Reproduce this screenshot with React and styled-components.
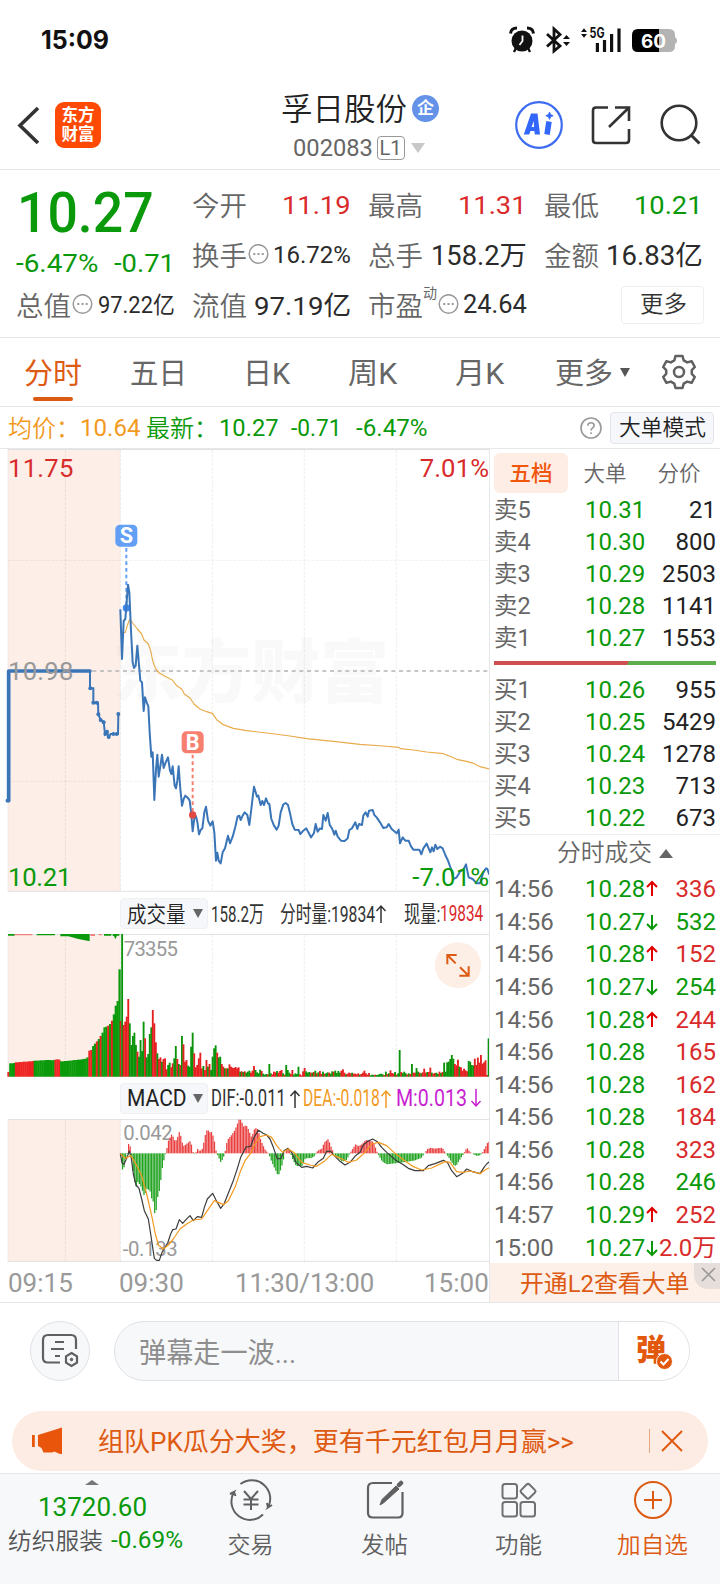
import React, { useLayoutEffect, useRef, useState } from "react";
import styled, { createGlobalStyle } from "styled-components";

const GREEN = "#0a990a";
const RED = "#d92b2b";
const ORANGE = "#dd5a12";
const LINE = "#e6e7e9";

const GlobalStyle = createGlobalStyle`
  * { box-sizing: border-box; }
  body {
    margin: 0;
    background: #fff;
    color: #222;
    font-family: Roboto, "Noto Sans CJK SC", sans-serif;
  }
  svg { display: block; flex: none; }
`;

const Page = styled.div`
  width: 720px;
  height: 1584px;
  display: flex;
  flex-direction: column;
  overflow: hidden;
`;

const FitBox = styled.span`
  display: inline-block;
  flex: none;
  width: ${(p) => p.$w}px;
  font-size: ${(p) => p.$size}px;
  font-weight: ${(p) => p.$weight || 400};
  color: ${(p) => p.$color || "inherit"};
  line-height: 1.2;
  margin-left: ${(p) => p.$ml || 0}px;
`;

const FitInner = styled.span`
  display: inline-block;
  white-space: pre;
  transform-origin: left center;
`;

const HAN = /[\u4e00-\u9fa5]/;
const HAN_ONLY = /^[\u4e00-\u9fa5：]+$/;

// Squeezes or stretches a piece of text to an exact width,
// Chinese text also sits a bit lower and is drawn lighter
function Fit({ w, size, color, weight, ml, drop = 0.065, children }) {
  const ref = useRef(null);
  const [scale, setScale] = useState(1);
  const text = String(children);

  useLayoutEffect(() => {
    setScale(w / ref.current.offsetWidth);
  }, [w, children]);

  return (
    <FitBox $w={w} $size={size} $color={color} $weight={weight || (HAN_ONLY.test(text) ? 350 : 400)} $ml={ml}>
      <FitInner
        ref={ref}
        style={{ transform: `translateY(${HAN.test(text) ? drop : 0}em) scaleX(${scale})` }}
      >
        {children}
      </FitInner>
    </FitBox>
  );
}

/* ---------- status bar + header ---------- */

const StatusBar = styled.div`
  height: 80px;
  flex: none;
  display: flex;
  justify-content: space-between;
  padding: 0 40px;
  font-family: Inter, sans-serif;
`;

const Clock = styled.div`
  padding-top: 23.5px;
`;

const StatusIcons = styled.div`
  padding-top: 24px;
  margin-right: 2px;
`;

const Header = styled.header`
  height: 90px;
  flex: none;
  display: grid;
  grid-template-columns: 240px 1fr 240px;
  border-bottom: 1px solid ${LINE};
`;

const HeaderLeft = styled.div`
  display: flex;
  align-items: center;
  padding-left: 17px;
  gap: 15px;
`;

const Logo = styled.div`
  width: 46px;
  height: 46px;
  border-radius: 9px;
  background: #ff4a05;
  color: #fff;
  font-size: 16.5px;
  font-weight: 700;
  line-height: 19px;
  padding-top: 4px;
  text-align: center;
`;

const TitleBlock = styled.div`
  display: flex;
  flex-direction: column;
  align-items: center;
`;

const TitleRow = styled.div`
  display: flex;
  align-items: center;
  height: 40px;
  margin-top: 8px;
  gap: 5px;
`;

const CorpBadge = styled.span`
  width: 27px;
  height: 27px;
  border-radius: 50%;
  background: #6492e8;
  color: #fff;
  font-size: 17px;
  font-weight: 700;
  line-height: 27px;
  text-align: center;
`;

const CodeRow = styled.div`
  display: flex;
  align-items: center;
  height: 28px;
  margin-top: 6px;
  margin-right: 3px;
  color: #666;
`;

const LevelTag = styled.span`
  width: 28px;
  height: 24px;
  margin: 0 6px 0 4px;
  border: 1px solid #999;
  border-radius: 4px;
  font-size: 20px;
  line-height: 22px;
  text-align: center;
`;

const Triangle = styled.span`
  display: inline-block;
  flex: none;
  width: 0;
  height: 0;
  border: ${(p) => p.$w / 2}px solid transparent;
  border-top: ${(p) => (p.$up ? 0 : p.$h)}px solid ${(p) => p.$color};
  border-bottom: ${(p) => (p.$up ? p.$h : 0)}px solid
    ${(p) => (p.$up ? p.$color : "transparent")};
  margin-left: ${(p) => p.$ml || 0}px;
`;

const HeaderRight = styled.div`
  display: flex;
  padding: 19px 0 0 34px;
`;

/* ---------- quote ---------- */

const Quote = styled.section`
  height: 168px;
  flex: none;
  display: flex;
  gap: 18px;
  padding: 10px 17px 0;
  border-bottom: 1px solid ${LINE};
`;

const QuoteCol = styled.div`
  width: 158px;
  display: flex;
  flex-direction: column;
`;

const QuoteCell = styled.div`
  height: ${(p) => p.$h || 50}px;
  padding-bottom: ${(p) => p.$pb || 0}px;
  display: flex;
  align-items: center;
  justify-content: ${(p) => (p.$end ? "flex-end" : "space-between")};
  color: #2b2b2b;
`;

const QuoteLabel = styled.span`
  display: flex;
  align-items: center;
  margin-left: -1px;
  color: #666;
`;

const Sup = styled.sup`
  font-size: 14px;
  line-height: 14px;
  align-self: flex-start;
  margin-top: -3px;
`;

const MoreButton = styled.button`
  width: 83px;
  height: 38px;
  margin-right: -1px;
  padding: 0;
  border: 1px solid #eceef0;
  border-radius: 4px;
  background: #fff;
  font-family: inherit;
  color: #333;
`;

/* ---------- tabs ---------- */

const Tabs = styled.nav`
  height: 69px;
  flex: none;
  display: grid;
  grid-template-columns: 106px 113px 105px 107px 100px 107px 35px;
  padding-left: 24px;
  align-items: center;
  border-bottom: 1px solid ${LINE};
`;

const Tab = styled.div`
  position: relative;
  height: 100%;
  display: flex;
  align-items: center;
  color: ${(p) => (p.$active ? ORANGE : "#666")};
  &::after {
    content: "";
    display: ${(p) => (p.$active ? "block" : "none")};
    position: absolute;
    left: 9px;
    bottom: 5px;
    width: 40px;
    height: 4px;
    border-radius: 2px;
    background: ${ORANGE};
  }
`;

const AvgRow = styled.div`
  height: 42px;
  flex: none;
  display: flex;
  align-items: center;
  padding: 0 6px 0 8px;
  border-bottom: 1px solid ${LINE};
`;

const ModeButton = styled.button`
  width: 104px;
  height: 32px;
  margin-left: 8px;
  padding: 0;
  border: 1px solid #e3e5ea;
  border-radius: 4px;
  background: #f6f7fa;
  font-family: inherit;
  color: #222;
`;

const Spacer = styled.div`
  flex: 1;
`;

/* ---------- charts ---------- */

const Body = styled.main`
  height: 854px;
  flex: none;
  display: flex;
  border-bottom: 1px solid ${LINE};
`;

const Charts = styled.div`
  width: 490px;
  flex: none;
  border-right: 1px solid ${LINE};
`;

const LegendRow = styled.div`
  height: 42px;
  display: flex;
  align-items: center;
  padding: 1px 0 0 120px;
`;

const LegendButton = styled.div`
  width: 88px;
  height: 31px;
  flex: none;
  display: flex;
  align-items: center;
  padding-left: 6px;
  border: 1px solid #eef0f2;
  border-radius: 4px;
  background: #f6f7fa;
  color: #222;
`;

const TimeAxis = styled.div`
  height: 40px;
  display: flex;
  align-items: center;
  padding: 3px 0 0 8px;
`;

const points = (s) => s.trim().split(/\s+/).join(" ");

const PRE_LINE = points(`270,666 270,718 280,718 280,761 294,761 295,796 302,813 311,818
  315,855 321,848 326,864 332,855 354,855 355,795`);

const PRE_DOTS = [
  [271, 718], [280, 761], [290, 761], [295, 796], [302, 813], [311, 820],
  [316, 855], [321, 848], [326, 864], [340, 855], [350, 855], [355, 795],
];

const PRICE = points(`361,481 366,630 371,516 376,510 384,407 388,430 393,545 398,640 402,657
  407,650 412,590 418,660 421,695 426,700 431,786 435,745 440,760 445,772 449,850 454,923
  458,910 463,1053 468,960 472,917 476,983 482,945 486,917 491,957 497,940 504,925 510,965
  514,975 518,952 524,1010 528,1018 532,995 536,952 541,1020 546,1070 551,1050 556,1040
  563,1046 569,1055 573,1085 578,1147 584,1100 588,1102 592,1118 597,1156 602,1143 607,1138
  613,1090 618,1073 624,1115 631,1130 638,1117 643,1150 648,1235 652,1211 656,1235 662,1243
  668,1210 675,1198 684,1160 690,1183 698,1163 706,1133 713,1102 718,1100 722,1113 727,1102
  734,1090 742,1098 748,1128 754,1080 758,1045 762,1013 767,1030 771,1043 775,1040 782,1068
  787,1056 792,1068 798,1048 804,1063 808,1065 814,1110 822,1130 830,1142 836,1130 842,1090
  850,1066 857,1062 864,1068 870,1093 877,1125 884,1142 896,1143 901,1155 908,1147 919,1138
  925,1150 933,1165 942,1152 947,1125 953,1148 960,1138 966,1140 970,1098 977,1115 983,1092
  989,1127 997,1140 1003,1157 1007,1145 1013,1163 1023,1175 1034,1176 1043,1168 1048,1143
  1056,1138 1066,1120 1072,1140 1077,1125 1086,1128 1090,1100 1097,1090 1103,1103 1107,1085
  1118,1083 1123,1098 1130,1105 1140,1120 1150,1137 1160,1135 1166,1125 1175,1140 1190,1153
  1196,1142 1200,1183 1208,1165 1216,1175 1226,1175 1233,1192 1240,1202 1258,1202 1264,1216
  1270,1198 1280,1184 1291,1210 1296,1195 1301,1207 1306,1187 1312,1200 1320,1193 1328,1198
  1336,1218 1344,1235 1354,1263 1360,1290 1370,1285 1380,1268 1390,1262 1398,1246 1406,1285
  1418,1290 1430,1303 1440,1303 1450,1270 1458,1258 1462,1260 1468,1277`);

const AVERAGE = points(`371,550 376,550 382,530 388,513 392,513 400,525 412,540 425,555 432,573
  445,585 452,605 458,635 466,658 478,672 495,682 517,693 530,710 545,720 553,735 570,747
  582,765 600,780 620,788 638,794 650,812 670,827 700,838 740,845 800,852 870,861 920,869
  1000,877 1080,886 1150,891 1195,895 1202,899 1240,903 1280,909 1330,914 1350,922 1370,931
  1400,937 1420,943 1440,953 1468,960`);

const DIF = points(`361,104 366,132 372,136 380,118 388,96 394,118 400,165 408,198 417,208
  425,240 433,275 445,300 452,345 458,385 463,418 470,424 478,424 486,400 495,385 503,372
  512,345 518,332 528,330 538,302 548,313 558,302 570,290 580,305 592,293 605,295 613,265
  622,240 638,223 648,243 662,268 672,255 684,225 698,190 710,155 722,115 738,84 752,82
  762,55 775,34 788,42 800,48 810,60 820,85 832,120 843,118 852,95 864,88 875,100 888,130
  905,145 920,142 938,147 955,128 970,118 980,97 992,97 1005,112 1020,127 1035,138 1050,130
  1065,112 1080,100 1090,78 1103,67 1118,60 1132,68 1145,85 1160,100 1175,113 1190,125
  1210,137 1225,148 1245,155 1270,155 1285,140 1305,134 1330,124 1342,130 1355,155 1370,173
  1388,163 1400,150 1415,157 1440,164 1452,145 1460,135 1468,128`);

const DEA = points(`361,104 375,118 393,110 410,140 425,170 440,225 455,290 466,345 475,378
  490,390 505,378 520,360 540,330 560,315 580,303 605,300 622,275 643,245 655,250 670,257
  685,245 705,205 720,160 735,125 752,103 765,75 780,53 800,48 815,55 830,80 848,100 865,90
  885,103 905,130 930,138 950,142 975,125 995,106 1015,115 1045,130 1070,123 1095,100
  1115,75 1135,70 1160,80 1185,103 1210,122 1240,143 1265,153 1295,147 1335,128 1350,130
  1370,158 1390,160 1410,156 1440,164 1455,153 1468,146`);

// Call auction volume, one bar for each 5.65 units
const PRE_VOLUME = `r14 g40 g40 g41 r43 r43 r44 r44 r45 r45 r45 r46 r46 r47 g48 g48 g48 g49
  g49 g49 g50 g50 g50 g49 g50 r51 r52 r51 g46 g46 g47 g47 g48 g48 g49 g50 g50 g51 g51 g52
  g53 g54 g58 r78 r80 g92 g99 r106 g113 r122 g132 g148 g150 r153 g158 r168 g187 g213 g227
  g322`;

// Continuous trading volume, one bar for each minute
const VOLUME = `r167 g428 r155 r165 r180 r233 g160 g95 g122 g132 g95 r75 g60 g110 g77 g165
  r115 g58 g68 g128 g148 r200 r160 r103 g70 r53 r58 g45 r53 r55 r22 g35 g42 r28 r40 g55
  g92 r53 g38 r35 g122 r97 r45 r50 g33 g30 g90 g132 r70 r28 r35 r55 r72 r25 g32 r20 r50
  g30 r38 g20 g60 g85 g94 r72 g58 g60 r38 r30 g25 r25 g25 r37 r30 r27 r26 r29 r25 r28
  g15 r16 g14 r16 g12 g15 g18 r12 r18 r32 g20 g13 g10 g21 r17 g9 g6 g8 r7 g38 g10 r7 r15
  r13 g17 r12 r17 r20 g10 r6 g35 g20 g12 r8 r20 g6 g10 g8 g30 r7 r4 r16 r26 g16 g12 g14
  r12 g12 r14 g18 r10 g13 r17 r8 g15 r9 g10 g13 r12 g9 g16 r15 g18 g11 g17 g12 r18 r22
  r12 g7 r9 r12 r10 g12 r9 r9 r7 r10 g6 r8 r12 r18 r10 r6 r11 g4 g6 g5 r6 g5 g6 g8 g9
  g7 r5 g15 r8 g10 r19 r11 r9 g14 r6 g10 g80 r14 g11 g15 g10 r7 g10 r8 g38 r12 r12 g26
  g15 r12 g10 r13 r24 r12 g14 r14 r27 g12 r9 r11 g12 g8 r15 g11 r14 g42 g15 g43 g45
  g53 g65 g54 r38 r34 r51 g30 r28 r18 r24 r19 r16 g47 g45 g35 g34 r54 r35 r57 r42 r65
  r39 r43 r49 r5 g115`;

const toBars = (s) =>
  s.trim().split(/\s+/).map((t) => ({ up: t[0] === "r", h: +t.slice(1) }));

// MACD histogram, [x, value] knots that the bars are read from
const HIST = [
  [361, -8], [366, -52], [371, -40], [375, -15], [380, 0], [385, 35], [390, 15], [394, -20],
  [398, -55], [403, -90], [407, -100], [412, -85], [421, -100], [431, -128], [440, -105],
  [449, -115], [454, -140], [458, -145], [463, -186], [468, -165], [472, -125], [477, -110],
  [481, -77], [486, -38], [490, -20], [495, 0], [500, 20], [504, 40], [514, 58], [523, 37],
  [528, 40], [537, 67], [546, 28], [550, 22], [569, 37], [573, 25], [578, 0], [583, -2],
  [592, 15], [597, 5], [606, 15], [610, 35], [615, 60], [620, 72], [629, 62], [634, 65],
  [643, 30], [647, 3], [661, -28], [670, -8], [675, 12], [680, 40], [693, 55], [703, 70],
  [716, 103], [721, 100], [730, 78], [735, 85], [740, 80], [753, 48], [763, 77], [772, 72],
  [781, 38], [795, 8], [804, 0], [813, -25], [832, -66], [836, -62], [846, -30], [855, 10],
  [860, 15], [868, 5], [878, -22], [887, -38], [905, -38], [914, -15], [933, -14], [942, -8],
  [951, 8], [965, 15], [970, 32], [983, 43], [992, 18], [1002, -5], [1025, -25], [1038, -20],
  [1048, 0], [1057, 15], [1067, 30], [1071, 20], [1085, 28], [1095, 40], [1118, 35],
  [1131, 0], [1145, -25], [1159, -33], [1200, -28], [1240, -22], [1262, -14], [1272, 0],
  [1280, 13], [1292, 17], [1300, 14], [1325, 17], [1335, 0], [1343, -10], [1352, -25],
  [1360, -36], [1366, -38], [1380, -15], [1388, -3], [1396, 12], [1400, 16], [1408, 4],
  [1420, -4], [1430, -8], [1440, -5], [1446, 3], [1456, 22], [1462, 34], [1468, 35],
];

function readHist(x) {
  const i = Math.max(1, HIST.findIndex((k) => k[0] >= x));
  const [x0, v0] = HIST[i - 1];
  const [x1, v1] = HIST[i];
  return v0 + ((v1 - v0) * (x - x0)) / (x1 - x0);
}

const MINUTE = 4.6;
const GRID_X = [196, 361, 637, 913, 1189];
const VOLUME_BARS = toBars(VOLUME);
// The last bar closes the session at the right edge
const VOLUME_STEP = (1463 - 359) / (VOLUME_BARS.length - 1);

function Pane({ h, children, rows = [] }) {
  return (
    <svg width="489" height={h} viewBox={`0 0 1467 ${h * 3}`} fontFamily="Roboto">
      <rect x="24" y="3" width="337" height={h * 3 - 3} fill="#fdeee7" />
      <path d={`M24 1.5H1467M24 ${h * 3 - 2}H1467`} stroke="#e1e2e4" strokeWidth="3" />
      <path d={`M24 0V${h * 3}`} stroke="#e8e4e2" strokeWidth="2" />
      {GRID_X.map((x) => (
        <path key={x} d={`M${x} 3V${h * 3}`} stroke="#000" strokeOpacity=".07" strokeWidth="3" strokeDasharray="9 4" />
      ))}
      {rows.map((y) => (
        <path key={y} d={`M24 ${y}H1467`} stroke="#000" strokeOpacity=".06" strokeWidth="3" strokeDasharray="9 4" />
      ))}
      {children}
    </svg>
  );
}

function Marker({ x, top, dot, color, dotColor, letter }) {
  return (
    <g>
      <path d={`M${x} ${top + 70}V${dot}`} stroke={color} strokeWidth="6" strokeDasharray="11 9" />
      <circle cx={x} cy={dot} r="11" fill={dotColor} />
      <rect x={x - 33} y={top} width="66" height="66" rx="14" fill={color} />
      <text x={x} y={top + 56} fontSize="65" fontWeight="700" fill="#fff" textAnchor="middle">
        {letter}
      </text>
    </g>
  );
}

function PriceChart() {
  return (
    <Pane h={443} rows={[334, 997]}>
      <text x="338" y="745" fontFamily="Noto Sans CJK SC" fontWeight="900" fontSize="208" textLength="830" fill="#000" fillOpacity=".024">
        东方财富
      </text>
      <path d="M24 666H1467" stroke="#b4b4b4" strokeWidth="5" strokeDasharray="12 11" />
      <polyline points="22,1055 26,1055 26,666 270,666" fill="none" stroke="#3a75b8" strokeWidth="11" strokeLinejoin="round" strokeLinecap="round" />
      <polyline points={PRE_LINE} fill="none" stroke="#3a75b8" strokeWidth="6" />
      {PRE_DOTS.map(([x, y]) => (
        <circle key={`${x}-${y}`} cx={x} cy={y} r="6" fill="#3a75b8" />
      ))}
      <polyline points={AVERAGE} fill="none" stroke="#e9ab4c" strokeWidth="3.5" strokeLinejoin="round" />
      <Marker x={379} top={227} dot={477} color="#629ff5" dotColor="#3f8bf7" letter="S" />
      <polyline points={PRICE} fill="none" stroke="#3a75b8" strokeWidth="6" strokeLinejoin="round" />
      <Marker x={578} top={847} dot={1098} color="#f77f70" dotColor="#e04a42" letter="B" />
      <g fontSize="77">
        <text x="24" y="83" fill={RED} textLength="196">11.75</text>
        <text x="1467" y="83" fill={RED} textAnchor="end" textLength="208">7.01%</text>
        <text x="24" y="693" fill="#999" textLength="196">10.98</text>
        <text x="24" y="1310" fill={GREEN} textLength="190">10.21</text>
        <text x="1467" y="1310" fill={GREEN} textAnchor="end" textLength="230">-7.01%</text>
      </g>
    </Pane>
  );
}

function VolumeChart() {
  return (
    <Pane h={143}>
      {toBars(PRE_VOLUME).map((b, i) => (
        <rect key={i} x={22 + i * 5.65} y={428 - b.h} width="6.8" height={b.h} fill={b.up ? "#ee2424" : "#0b9a0b"} />
      ))}
      {VOLUME_BARS.map((b, i) => (
        <rect key={i} x={359 + i * VOLUME_STEP} y={428 - b.h} width="5.6" height={b.h} fill={b.up ? "#e52020" : "#0b930b"} />
      ))}
      <path d="M24 0H44V5H24zM110 0H165V4H110zM181 0H269V22L232 14L205 7H181zM312 0H334V5H312zM338 0H358V5H351L346 16L342 6H338z" fill="#0b9a0b" />
      <path d="M44 0H97V4H44zM271 0H285V6H271zM296 0H306V4H296z" fill="#f08080" />
      <text x="371" y="65" fontSize="61" fill="#999" textLength="163">73355</text>
      <circle cx="1374" cy="94" r="69" fill="#fdeee6" />
      <path d="M1342 91V63H1370M1342 63L1367 88M1406 97V125H1378M1406 125L1380 100" fill="none" stroke={ORANGE} strokeWidth="6" />
    </Pane>
  );
}

function MacdChart() {
  const bars = [];
  for (let x = 361; x < 1467; x += MINUTE) bars.push([x, readHist(x)]);
  return (
    <Pane h={143}>
      <g fontSize="61" fill="#999">
        <text x="370" y="63" textLength="148">0.042</text>
        <text x="368" y="411" textLength="165">-0.133</text>
      </g>
      {bars.map(([x, v]) => (
        <rect key={x} x={x} y={v > 0 ? 103 - v : 103} width="3.8" height={Math.abs(v)} fill={v > 0 ? "#ea4040" : "#22a322"} />
      ))}
      <polyline points={DIF} fill="none" stroke="#3c3c3c" strokeWidth="3.6" strokeLinejoin="round" />
      <polyline points={DEA} fill="none" stroke="#f39a1e" strokeWidth="3.6" strokeLinejoin="round" />
    </Pane>
  );
}

/* ---------- order book ---------- */

const Book = styled.aside`
  width: 230px;
  display: flex;
  flex-direction: column;
`;

const BookTabs = styled.div`
  height: 45px;
  flex: none;
  display: flex;
  padding: 4px 4px 1px;
  color: #666;
`;

const BookTab = styled.div`
  width: 74px;
  height: 40px;
  display: flex;
  align-items: center;
  justify-content: center;
  border-radius: 6px;
  background: ${(p) => (p.$active ? "#feede4" : "none")};
  color: ${(p) => (p.$active ? "#f0560c" : "#666")};
`;

const BookRow = styled.div`
  height: ${(p) => p.$h || 32}px;
  flex: none;
  display: grid;
  grid-template-columns: 91px 61px 13px 1fr;
  align-items: center;
  padding: ${(p) => p.$pt || 0}px 4px 0;
  font-size: 24px;
  line-height: 1;
  color: #666;
`;

const Price = styled.span`
  color: ${GREEN};
`;

const Amount = styled.span`
  justify-self: end;
  white-space: nowrap;
  color: ${(p) => p.$color || "#222"};
`;

const RatioBar = styled.div`
  height: 4px;
  flex: none;
  margin: 7px 4px 9px;
  background: linear-gradient(120deg, #cf4f4f 60.2%, #5fae4d 60.2%);
`;

const DealTitle = styled.div`
  height: 38px;
  flex: none;
  display: flex;
  align-items: center;
  padding-left: 67px;
  border-top: 1px solid #f0f0f0;
  color: #666;
`;

const Promo = styled.div`
  position: relative;
  height: 39px;
  flex: none;
  padding-left: 30px;
  display: flex;
  align-items: center;
  background: #fdf0e9;
`;

const PromoClose = styled.div`
  position: absolute;
  right: 0;
  top: 0;
  width: 26px;
  height: 26px;
  padding: 4px 0 0 7px;
  border-bottom-left-radius: 14px;
  background: #e5dedb;
`;

const ASKS = [["卖5", "10.31", "21"], ["卖4", "10.30", "800"], ["卖3", "10.29", "2503"], ["卖2", "10.28", "1141"], ["卖1", "10.27", "1553"]];
const BIDS = [["买1", "10.26", "955"], ["买2", "10.25", "5429"], ["买3", "10.24", "1278"], ["买4", "10.23", "713"], ["买5", "10.22", "673"]];

const DEALS = [
  ["14:56", "10.28", "up", "336", RED],
  ["14:56", "10.27", "down", "532", GREEN],
  ["14:56", "10.28", "up", "152", RED],
  ["14:56", "10.27", "down", "254", GREEN],
  ["14:56", "10.28", "up", "244", RED],
  ["14:56", "10.28", "", "165", RED],
  ["14:56", "10.28", "", "162", RED],
  ["14:56", "10.28", "", "184", RED],
  ["14:56", "10.28", "", "323", RED],
  ["14:56", "10.28", "", "246", GREEN],
  ["14:57", "10.29", "up", "252", RED],
  ["15:00", "10.27", "down", "2.0万", RED],
];

function DealArrow({ dir }) {
  if (!dir) return <span />;
  return (
    <svg width="12" height="18" viewBox="0 0 12 18" fill="none" stroke={dir === "up" ? "#e00000" : "#0a990a"} strokeWidth="2">
      {dir === "up" ? <path d="M6 16V2M1 7L6 2L11 7" /> : <path d="M6 2V16M1 11L6 16L11 11" />}
    </svg>
  );
}

function Level({ row }) {
  return (
    <BookRow>
      <Fit w={37} size={23.5} drop={0.02}>{row[0]}</Fit>
      <Price>{row[1]}</Price>
      <span />
      <Amount>{row[2]}</Amount>
    </BookRow>
  );
}

/* ---------- comment bar, banner, bottom nav ---------- */

const CommentBar = styled.div`
  height: 108px;
  flex: none;
  display: flex;
  padding: 18px 30px 0;
  gap: 24px;
`;

const RoundButton = styled.div`
  width: 60px;
  height: 60px;
  display: flex;
  align-items: center;
  justify-content: center;
  border: 1px solid #dfe1e6;
  border-radius: 50%;
  background: #f7f8fa;
`;

const CommentInput = styled.div`
  width: 576px;
  height: 60px;
  display: flex;
  align-items: center;
  padding-left: 24px;
  border: 1px solid #dfe1e6;
  border-radius: 30px;
  background: #f7f8fa;
  color: #8e8e8e;
  overflow: hidden;
`;

const DanmuToggle = styled.div`
  position: relative;
  width: 71px;
  height: 58px;
  padding: 9px 0 0 17px;
  border-left: 1px solid #dfe1e6;
  background: #fff;
  color: #e2580c;
  font-size: 30px;
  font-weight: 900;
  line-height: 38px;
`;

const CheckBadge = styled.svg`
  position: absolute;
  left: 37px;
  top: 31px;
`;

const Banner = styled.div`
  height: 60px;
  flex: none;
  margin: 0 12px 2px;
  display: flex;
  align-items: center;
  padding: 0 25px 0 20px;
  border-radius: 30px;
  background: #fdece3;
`;

const BannerRule = styled.span`
  width: 1px;
  height: 24px;
  margin-right: 11px;
  background: #e8a584;
`;

const BottomNav = styled.footer`
  flex: 1;
  display: flex;
  border-top: 1px solid ${LINE};
  background: #f7f8fa;
`;

const IndexCell = styled.div`
  width: 184px;
  padding: 6px 0 0 8px;
  color: #555;
`;

const IndexTop = styled.div`
  height: 9px;
  padding-left: 77px;
  display: flex;
`;

const IndexValue = styled.div`
  padding-left: 30px;
  height: 36px;
  display: flex;
  align-items: center;
`;

const IndexName = styled.div`
  display: flex;
  align-items: center;
  height: 31px;
`;

const NavItem = styled.div`
  width: 134px;
  display: flex;
  flex-direction: column;
  align-items: center;
  padding: 5px 1px 0 0;
  gap: 10px;
  color: ${(p) => (p.$accent ? ORANGE : "#606060")};
`;

const TAB_LIST = [["分时", 58], ["五日", 57], ["日K", 47], ["周K", 49], ["月K", 49]];

function MoreDots() {
  return (
    <svg width="22" height="22" viewBox="0 0 22 22" fill="none" stroke="#999" strokeWidth="1.5">
      <circle cx="11.5" cy="10" r="9.3" />
      <path d="M6.3 10h2M10.5 10h2M14.7 10h2" strokeWidth="2" />
    </svg>
  );
}

function StatusGlyphs() {
  return (
    <svg width="170" height="32" viewBox="508 24 170 32" fill="#111">
      <circle cx="522" cy="41" r="10.5" />
      <path d="M510.5 33.5Q511 28 517 28M533.5 33.5Q533 28 527 28" fill="none" stroke="#111" strokeWidth="3" />
      <path d="M516 48l-2 4M528 48l2 4" stroke="#111" strokeWidth="2.4" />
      <path d="M522.5 35.5V41L519.5 45" fill="none" stroke="#fff" strokeWidth="1.8" />
      <path d="M547 34L560 46L554 51V29L560 34.5L547 46.5" fill="none" stroke="#111" strokeWidth="2.8" />
      <path d="M563 39l3.5-4 3.5 4zM563 42l3.5 4 3.5-4zM581 32l3-3.8 3 3.8zM581 34l3 3.8 3-3.8z" />
      <text x="589.5" y="38" fontFamily="Inter" fontSize="14" fontWeight="700" textLength="15" lengthAdjust="spacingAndGlyphs">5G</text>
      <path d="M597.4 43V52M604.5 40V52M611.6 34V52M619 28.5V52" stroke="#111" strokeWidth="3.2" />
      <path d="M659 29H669Q675 29 675 35V37Q677 38 677 40.5T675 44V46Q675 52 669 52H659z" fill="#b3b3b3" />
      <path d="M659 29V52H638Q632 52 632 46V35Q632 29 638 29z" fill="#000" />
      <text x="641" y="47.5" fontFamily="Inter" fontSize="19" fontWeight="700" fill="#fff" textLength="25" lengthAdjust="spacingAndGlyphs">60</text>
    </svg>
  );
}

function HeaderIcons() {
  return (
    <svg width="190" height="52" viewBox="514 99 190 52" fill="none" stroke="#333" strokeWidth="2.6">
      <circle cx="539" cy="125" r="22.8" stroke="#3d6cf0" strokeWidth="2.2" />
      <path d="M523.8 134.5L531 113.5H537.5L540 134.5H534.8L534.4 131H530.4L529.2 134.5zM531.6 127H534.1L533.7 121z" fill="#3366fa" fillRule="evenodd" stroke="none" />
      <path d="M549 121.5L547 134.5" stroke="#3366fa" strokeWidth="5.5" />
      <path d="M549.5 112l1.1 2.6 2.6 1.1-2.6 1.1-1.1 2.6-1.1-2.6-2.6-1.1 2.6-1.1z" fill="#3366fa" stroke="#3366fa" strokeWidth=".8" />
      <path d="M608 107.5H596Q593 107.5 593 110.5V140Q593 143 596 143H626Q629 143 629 140V129M615 107.5H629V121M629 107.5L609 127" />
      <circle cx="679" cy="123" r="17.3" />
      <path d="M691 135L699.5 143.5" strokeWidth="3" />
    </svg>
  );
}

function GearIcon() {
  return (
    <svg width="34" height="36" viewBox="0 0 34 36" fill="none" stroke="#606060" strokeWidth="2.5" strokeLinejoin="round">
      <path d="M13.5 2H20.5L21.7 6.4L25.2 8.4L29.6 7.2L32.8 13L29.8 16.2V19.8L32.8 23L29.6 28.8L25.2 27.6L21.7 29.6L20.5 34H13.5L12.3 29.6L8.8 27.6L4.4 28.8L1.2 23L4.2 19.8V16.2L1.2 13L4.4 7.2L8.8 8.4L12.3 6.4Z" />
      <circle cx="17" cy="18" r="5" />
    </svg>
  );
}

export default function App() {
  return (
    <Page>
      <GlobalStyle />
      <StatusBar>
        <Clock><Fit w={68} size={26} weight={650} color="#111" ml={1}>15:09</Fit></Clock>
        <StatusIcons><StatusGlyphs /></StatusIcons>
      </StatusBar>

      <Header>
        <HeaderLeft>
          <svg width="23" height="40" viewBox="0 0 23 40" fill="none" stroke="#333" strokeWidth="3.6">
            <path d="M21 3L3 20.5L21 38" />
          </svg>
          <Logo>东方<br />财富</Logo>
        </HeaderLeft>
        <TitleBlock>
          <TitleRow>
            <Fit w={126} size={31}>孚日股份</Fit>
            <CorpBadge>企</CorpBadge>
          </TitleRow>
          <CodeRow>
            <Fit w={80} size={24}>002083</Fit>
            <LevelTag>L1</LevelTag>
            <Triangle $w={15} $h={10} $color="#c8c8c8" />
          </CodeRow>
        </TitleBlock>
        <HeaderRight><HeaderIcons /></HeaderRight>
      </Header>

      <Quote>
        <QuoteCol>
          <QuoteCell $h={69}><Fit w={137} size={55.5} weight={500} color={GREEN}>10.27</Fit></QuoteCell>
          <QuoteCell $h={31} $pb={4}>
            <Fit w={82} size={26.5} color={GREEN} ml={-1}>-6.47%</Fit>
            <Fit w={61} size={26.5} color={GREEN}>-0.71</Fit>
          </QuoteCell>
          <QuoteCell>
            <QuoteLabel><Fit w={55} size={27}>总值</Fit><MoreDots /></QuoteLabel>
            <Fit w={77} size={23}>97.22亿</Fit>
          </QuoteCell>
        </QuoteCol>
        <QuoteCol>
          <QuoteCell>
            <QuoteLabel><Fit w={55} size={27}>今开</Fit></QuoteLabel>
            <Fit w={69} size={26.5} color={RED}>11.19</Fit>
          </QuoteCell>
          <QuoteCell>
            <QuoteLabel><Fit w={55} size={27}>换手</Fit><MoreDots /></QuoteLabel>
            <Fit w={78} size={24}>16.72%</Fit>
          </QuoteCell>
          <QuoteCell>
            <QuoteLabel><Fit w={55} size={27}>流值</Fit></QuoteLabel>
            <Fit w={97} size={26.5} drop={0.03}>97.19亿</Fit>
          </QuoteCell>
        </QuoteCol>
        <QuoteCol>
          <QuoteCell>
            <QuoteLabel><Fit w={55} size={27}>最高</Fit></QuoteLabel>
            <Fit w={69} size={26.5} color={RED}>11.31</Fit>
          </QuoteCell>
          <QuoteCell>
            <QuoteLabel><Fit w={55} size={27}>总手</Fit></QuoteLabel>
            <Fit w={96} size={27} drop={0.03}>158.2万</Fit>
          </QuoteCell>
          <QuoteCell>
            <QuoteLabel><Fit w={55} size={27}>市盈</Fit><Sup>动</Sup><MoreDots /></QuoteLabel>
            <Fit w={64} size={25}>24.64</Fit>
          </QuoteCell>
        </QuoteCol>
        <QuoteCol>
          <QuoteCell>
            <QuoteLabel><Fit w={55} size={27}>最低</Fit></QuoteLabel>
            <Fit w={69} size={26.5} color={GREEN}>10.21</Fit>
          </QuoteCell>
          <QuoteCell>
            <QuoteLabel><Fit w={55} size={27}>金额</Fit></QuoteLabel>
            <Fit w={97} size={27} drop={0.03}>16.83亿</Fit>
          </QuoteCell>
          <QuoteCell $end>
            <MoreButton><Fit w={47} size={23} drop={0.02}>更多</Fit></MoreButton>
          </QuoteCell>
        </QuoteCol>
      </Quote>

      <Tabs>
        {TAB_LIST.map(([name, w], i) => (
          <Tab key={name} $active={i === 0}>
            <Fit w={w} size={29} weight={400}>{name}</Fit>
          </Tab>
        ))}
        <Tab>
          <Fit w={58} size={29} weight={400}>更多</Fit>
          <Triangle $w={10} $h={9} $color="#555" $ml={7} />
        </Tab>
        <GearIcon />
      </Tabs>

      <AvgRow>
        <Fit w={72} size={24} color="#f29a1f">均价：</Fit>
        <Fit w={61} size={24.5} color="#f29a1f">10.64</Fit>
        <Fit w={72} size={24} color={GREEN} ml={5}>最新：</Fit>
        <Fit w={60} size={24.5} color={GREEN} ml={1}>10.27</Fit>
        <Fit w={51} size={24.5} color={GREEN} ml={12}>-0.71</Fit>
        <Fit w={71} size={24.5} color={GREEN} ml={14}>-6.47%</Fit>
        <Spacer />
        <svg width="22" height="22" viewBox="0 0 22 22" fill="none" stroke="#999" strokeWidth="1.6">
          <circle cx="11" cy="11" r="10" />
          <path d="M7.8 8.6Q8 5.8 11 5.8T14.2 8.6Q14.2 10 12.4 11.2Q11 12 11 13.6M11 15.2V17" />
        </svg>
        <ModeButton><Fit w={87} size={22}>大单模式</Fit></ModeButton>
      </AvgRow>

      <Body>
        <Charts>
          <PriceChart />
          <LegendRow>
            <LegendButton>
              <Fit w={59} size={21.5}>成交量</Fit>
              <Triangle $w={10} $h={9} $color="#666" $ml={7} />
            </LegendButton>
            <Fit w={53} size={22.5} color="#333" ml={3}>158.2万</Fit>
            <Fit w={95} size={22.5} color="#333" ml={16}>分时量:19834</Fit>
            <svg width="12" height="20" viewBox="0 0 12 20" fill="none" stroke="#333" strokeWidth="1.5"><path d="M6 19V2M1.5 7L6 2L10.5 7" /></svg>
            <Fit w={36} size={22.5} color="#333" ml={17}>现量:</Fit>
            <Fit w={43} size={22.5} color={RED}>19834</Fit>
          </LegendRow>
          <VolumeChart />
          <LegendRow>
            <LegendButton>
              <Fit w={60} size={23.5}>MACD</Fit>
              <Triangle $w={10} $h={9} $color="#666" $ml={6} />
            </LegendButton>
            <Fit w={75} size={23} color="#333" ml={3}>DIF:-0.011</Fit>
            <svg width="16" height="20" viewBox="0 0 16 20" fill="none" stroke="#333" strokeWidth="1.5"><path d="M9 19V2M4.5 7L9 2L13.5 7" /></svg>
            <Fit w={77} size={23} color="#f29a1f" ml={1}>DEA:-0.018</Fit>
            <svg width="12" height="20" viewBox="0 0 12 20" fill="none" stroke="#f29a1f" strokeWidth="1.5"><path d="M6 19V2M1.5 7L6 2L10.5 7" /></svg>
            <Fit w={71} size={24} color="#c81fd0" ml={4}>M:0.013</Fit>
            <svg width="16" height="20" viewBox="-3 0 16 20" fill="none" stroke="#c81fd0" strokeWidth="1.5"><path d="M6 0V17M1.5 12L6 17L10.5 12" /></svg>
          </LegendRow>
          <MacdChart />
          <TimeAxis>
            <Fit w={65} size={26} color="#999">09:15</Fit>
            <Fit w={65} size={26} color="#999" ml={46}>09:30</Fit>
            <Fit w={139} size={26} color="#999" ml={51}>11:30/13:00</Fit>
            <Fit w={65} size={26} color="#999" ml={50}>15:00</Fit>
          </TimeAxis>
        </Charts>

        <Book>
          <BookTabs>
            <BookTab $active><Fit w={43} size={21.5} weight={500}>五档</Fit></BookTab>
            <BookTab><Fit w={43} size={21.5}>大单</Fit></BookTab>
            <BookTab><Fit w={43} size={21.5}>分价</Fit></BookTab>
          </BookTabs>
          {ASKS.map((row) => <Level key={row[0]} row={row} />)}
          <RatioBar />
          {BIDS.map((row) => <Level key={row[0]} row={row} />)}
          <DealTitle>
            <Fit w={95} size={23.5} drop={0.02}>分时成交</Fit>
            <Triangle $up $w={14} $h={9} $color="#666" $ml={7} />
          </DealTitle>
          {DEALS.map(([time, price, dir, amount, color], i) => (
            <BookRow $h={32.58} $pt={2} key={i}>
              <span>{time}</span>
              <Price>{price}</Price>
              <DealArrow dir={dir} />
              <Amount $color={color}>{amount}</Amount>
            </BookRow>
          ))}
          <Promo>
            <Fit w={169} size={24} color={ORANGE}>开通L2查看大单</Fit>
            <PromoClose>
              <svg width="15" height="15" viewBox="0 0 15 15" stroke="#999" strokeWidth="1.6"><path d="M1 1L14 14M14 1L1 14" /></svg>
            </PromoClose>
          </Promo>
        </Book>
      </Body>

      <CommentBar>
        <RoundButton>
          <svg width="38" height="36" viewBox="0 0 38 36" fill="none" stroke="#606060" strokeWidth="2.2">
            <path d="M19 29.5H7Q2 29.5 2 25V7Q2 2 7 2H30Q35 2 35 7V16M14 9H23M10 16H23M14 23H19" />
            <path d="M30.5 20L36 23.3V29.7L30.5 33L25 29.7V23.3Z" />
            <circle cx="30.5" cy="26.5" r="1.3" fill="#606060" strokeWidth="1" />
          </svg>
        </RoundButton>
        <CommentInput>
          <Fit w={157} size={28} drop={0.09}>弹幕走一波...</Fit>
          <Spacer />
          <DanmuToggle>
            弹
            <CheckBadge width="17" height="17" viewBox="0 0 17 17">
              <circle cx="8.5" cy="8.5" r="8" fill="#e2580c" stroke="#fff" />
              <path d="M4.5 8.5L7.5 11.5L12.5 6" fill="none" stroke="#fff" strokeWidth="2" />
            </CheckBadge>
          </DanmuToggle>
        </CommentInput>
      </CommentBar>

      <Banner>
        <svg width="31" height="28" viewBox="0 0 31 28" fill="#e9560b">
          <path d="M0 8H2.8V20H0zM6 8L30 0.5V27H28L22 24.5L20.5 25.5H11.5L9.5 21L6 19z" />
        </svg>
        <Fit w={476} size={26} color={ORANGE} ml={35}>组队PK瓜分大奖，更有千元红包月月赢&gt;&gt;</Fit>
        <Spacer />
        <BannerRule />
        <svg width="22" height="22" viewBox="0 0 22 22" stroke={ORANGE} strokeWidth="2"><path d="M1 1L21 21M21 1L1 21" /></svg>
      </Banner>

      <BottomNav>
        <IndexCell>
          <IndexTop><Triangle $up $w={14} $h={5} $color="#777" /></IndexTop>
          <IndexValue><Fit w={109} size={25.5} color={GREEN}>13720.60</Fit></IndexValue>
          <IndexName>
            <Fit w={95} size={23}>纺织服装</Fit>
            <Fit w={72} size={24} color={GREEN} ml={8}>-0.69%</Fit>
          </IndexName>
        </IndexCell>
        <NavItem>
          <svg width="44" height="42" viewBox="0 0 44 42" fill="none" stroke="#606060" strokeWidth="2">
            <path d="M11.5 5A18.5 18.5 0 0 1 39 28.5L43 26M39 28.5L38 24M34 35.5A18.5 18.5 0 0 1 5 13L1 15M5 13L6.5 17" />
            <path d="M15 12L22 20L29 12M22 20V31M14.5 20.5H29.5M14.5 25.5H29.5" />
          </svg>
          <Fit w={46} size={23}>交易</Fit>
        </NavItem>
        <NavItem>
          <svg width="38" height="42" viewBox="0 0 38 42" fill="none" stroke="#606060" strokeWidth="2.2">
            <path d="M26 4H7Q2 4 2 9V34Q2 38.5 7 38.5H32Q36.5 38.5 36.5 34V13" />
            <path d="M14 26L16 20.5L30 7L33 10L18 23.5Z" fill="#606060" strokeWidth="1" />
            <path d="M33 6L35 4" strokeWidth="4.5" strokeLinecap="round" />
          </svg>
          <Fit w={47} size={23}>发帖</Fit>
        </NavItem>
        <NavItem>
          <svg width="36" height="42" viewBox="0 0 36 42" fill="none" stroke="#707070" strokeWidth="2">
            <rect x="1.5" y="5" width="14.5" height="14.5" rx="2.5" />
            <rect x="1.5" y="23" width="14.5" height="14.5" rx="2.5" />
            <rect x="19.5" y="23" width="14.5" height="14.5" rx="2.5" />
            <rect x="21.3" y="6.5" width="11.5" height="11.5" rx="2" transform="rotate(45 27 12.25)" />
          </svg>
          <Fit w={47} size={23}>功能</Fit>
        </NavItem>
        <NavItem $accent>
          <svg width="40" height="42" viewBox="0 0 40 42" fill="none" stroke={ORANGE} strokeWidth="2">
            <circle cx="20" cy="21" r="18" />
            <path d="M20 12V30M11 21H29" />
          </svg>
          <Fit w={71} size={23}>加自选</Fit>
        </NavItem>
      </BottomNav>
    </Page>
  );
}
